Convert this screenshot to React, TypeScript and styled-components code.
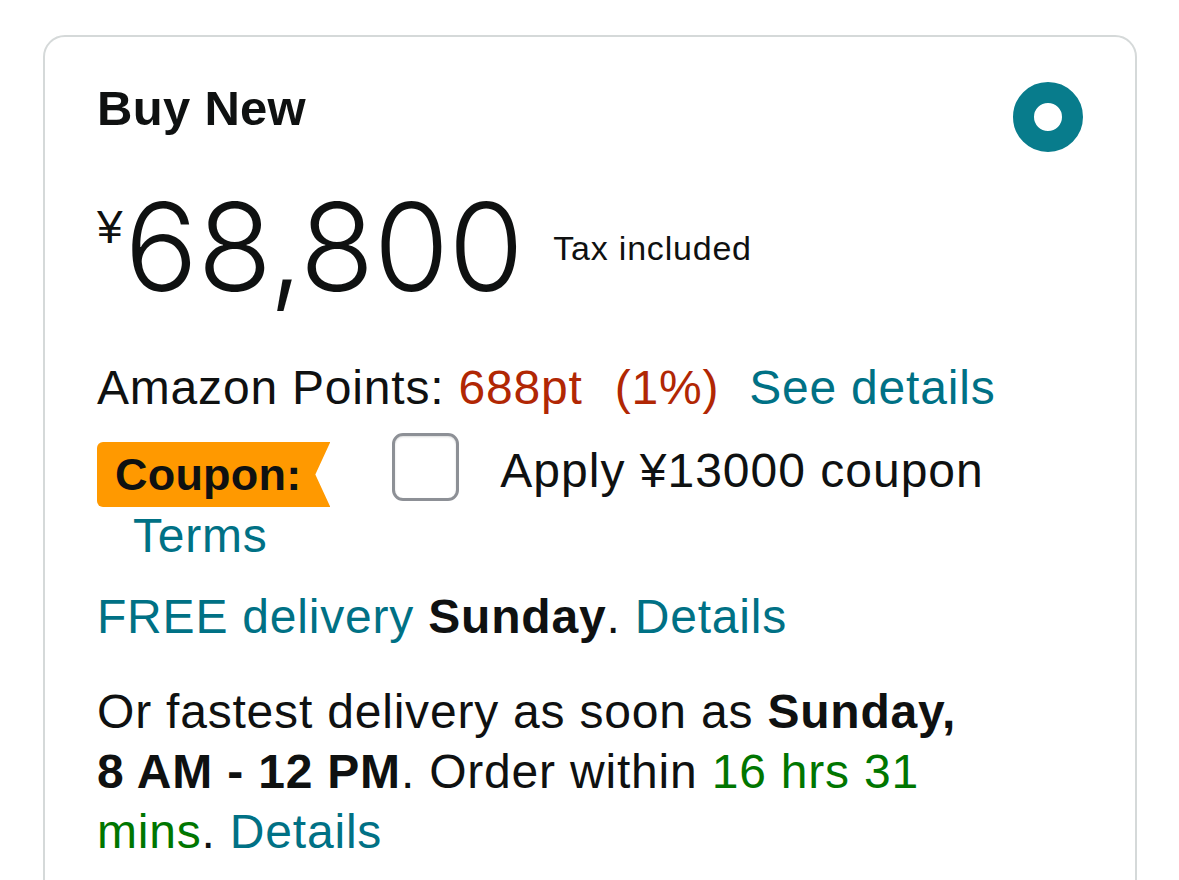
import styled, { createGlobalStyle } from 'styled-components'

const GlobalStyle = createGlobalStyle`
  html, body {
    margin: 0;
    padding: 0;
    background: #fff;
  }
  body {
    font-family: 'Liberation Sans', Arial, sans-serif;
    color: #0f1111;
    overflow: hidden;
  }
`

export default function App() {
  return (
    <>
      <GlobalStyle />
      <Page>
        <Card>
          <Header>
            <Title>Buy New</Title>
            <Radio role="radio" aria-checked="true" />
          </Header>

          <PriceRow>
            <Currency>¥</Currency>
            <Amount>68,800</Amount>
            <TaxNote>Tax included</TaxNote>
          </PriceRow>

          <PointsLine>
            Amazon Points: <Accent>688pt</Accent>
            <Accent $gap>(1%)</Accent>
            <Link $gap>See details</Link>
          </PointsLine>

          <CouponRow>
            <Badge>Coupon:</Badge>
            <Checkbox role="checkbox" aria-checked="false" />
            <CouponLabel>Apply ¥13000 coupon</CouponLabel>
          </CouponRow>
          <Terms>Terms</Terms>

          <DeliveryLine>
            <Link>FREE delivery</Link> <b>Sunday</b>. <Link>Details</Link>
          </DeliveryLine>

          <Paragraph>
            Or fastest delivery as soon as <b>Sunday,</b>{' '}
            <NoWrap>
              <b>8 AM - 12 PM</b>.
            </NoWrap>{' '}
            Order within <Success>16 hrs 31</Success> <Success>mins</Success>.{' '}
            <Link>Details</Link>
          </Paragraph>
        </Card>
      </Page>
    </>
  )
}

const Page = styled.div`
  padding: 35px 42px 0 43px;
`

const Card = styled.div`
  min-height: 1000px;
  border: 2px solid #d5d9d9;
  border-radius: 22px;
  padding: 41px 52px 0;
`

const Header = styled.div`
  display: flex;
  justify-content: space-between;
  align-items: flex-start;
`

const Title = styled.h2`
  margin: 0;
  font-size: 49px;
  line-height: 60px;
  font-weight: 700;
  letter-spacing: 0.3px;
`

const Radio = styled.span`
  display: block;
  box-sizing: border-box;
  width: 70px;
  height: 70px;
  margin-top: 4px;
  border-radius: 50%;
  border: 21px solid #087c8c;
  background: #fff;
`

const PriceRow = styled.div`
  display: flex;
  align-items: flex-start;
  margin-top: 32px;
`

const Currency = styled.span`
  margin-top: 21px;
  font-size: 46px;
  line-height: 44px;
`

const Amount = styled.span`
  margin-left: 2px;
  font-family: Inter, 'Liberation Sans', sans-serif;
  font-size: 122px;
  font-weight: 300;
  line-height: 125px;
  letter-spacing: -0.6px;
`

const TaxNote = styled.span`
  margin: 44px 0 0 30px;
  font-size: 34px;
  line-height: 40px;
  letter-spacing: 0.8px;
`

const BodyText = styled.div`
  font-size: 48px;
  line-height: 58px;
  letter-spacing: 0.8px;
`

const PointsLine = styled(BodyText)`
  margin-top: 50px;
`

const Accent = styled.span<{ $gap?: boolean }>`
  color: #b12704;
  margin-left: ${(p) => (p.$gap ? '32px' : '0')};
`

const Link = styled.span<{ $gap?: boolean }>`
  color: #007185;
  margin-left: ${(p) => (p.$gap ? '30px' : '0')};
`

const Success = styled.span`
  color: #007600;
`

const CouponRow = styled.div`
  display: flex;
  align-items: flex-start;
  margin-top: 16px;
`

const Badge = styled.span`
  display: flex;
  align-items: center;
  box-sizing: border-box;
  height: 65px;
  margin-top: 9px;
  padding: 0 29px 0 18px;
  border-radius: 6px 0 0 6px;
  background: #ff9900;
  color: #0f1111;
  font-size: 45px;
  font-weight: 700;
  letter-spacing: 0.2px;
  clip-path: polygon(0 0, 100% 0, calc(100% - 15px) 50%, 100% 100%, 0 100%);
`

const Checkbox = styled.span`
  display: block;
  box-sizing: border-box;
  width: 67px;
  height: 68px;
  margin-left: 62px;
  border: 3px solid #8d9096;
  border-radius: 11px;
  background: #fff;
  box-shadow: inset 0 1px 2px rgba(15, 17, 17, 0.15);
`

const CouponLabel = styled(BodyText)`
  margin: 9px 0 0 41px;
  letter-spacing: 1px;
  white-space: nowrap;
`

const Terms = styled(BodyText)`
  padding-left: 36px;
  color: #007185;
`

const DeliveryLine = styled(BodyText)`
  margin-top: 23px;
`

const Paragraph = styled(BodyText)`
  max-width: 915px;
  margin-top: 36px;
  line-height: 60px;
`

const NoWrap = styled.span`
  white-space: nowrap;
`
